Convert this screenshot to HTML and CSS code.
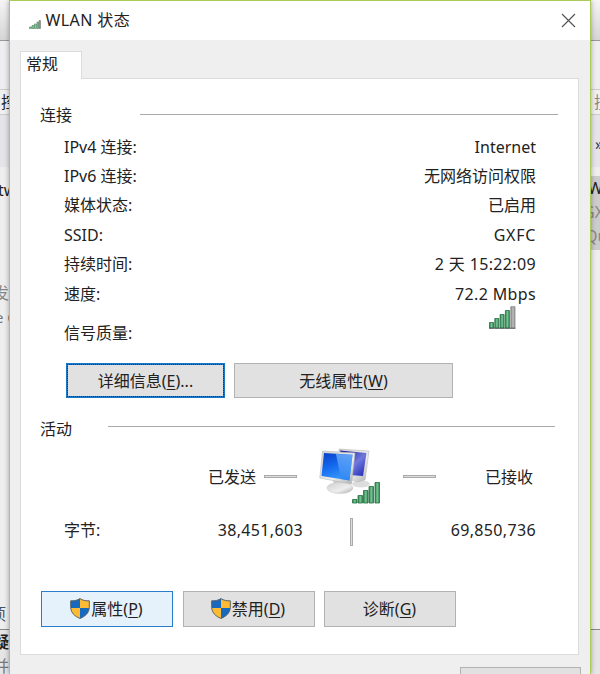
FILE: index.html
```
<!DOCTYPE html>
<html lang="zh-CN">
<head>
<meta charset="utf-8">
<title>WLAN 状态</title>
<link rel="stylesheet" href="styles.css">
</head>
<body>
<svg class="defs" width="0" height="0" aria-hidden="true">
  <defs>
    <linearGradient id="green" x1="0" x2="1" y1="0" y2="0"><stop offset="0" stop-color="#2c7d49"/><stop offset=".5" stop-color="#78c797"/><stop offset="1" stop-color="#2f8250"/></linearGradient>
    <linearGradient id="gray" x1="0" x2="1" y1="0" y2="0"><stop offset="0" stop-color="#888"/><stop offset=".5" stop-color="#bbb"/><stop offset="1" stop-color="#999"/></linearGradient>
    <linearGradient id="screen" x1="0" x2=".4" y1="0" y2="1"><stop offset="0" stop-color="#0b3fc4"/><stop offset=".5" stop-color="#1267ee"/><stop offset="1" stop-color="#3597fa"/></linearGradient>
    <linearGradient id="shine" x1="0" x2="0" y1="0" y2="1"><stop offset="0" stop-color="#8cc8ff"/><stop offset="1" stop-color="#2a7bf0"/></linearGradient>
    <linearGradient id="back" x1="0" x2="1" y1="0" y2="1"><stop offset="0" stop-color="#10108c"/><stop offset=".55" stop-color="#7079dc"/><stop offset="1" stop-color="#1b22b4"/></linearGradient>
    <linearGradient id="metal" x1="0" x2="1" y1="0" y2="1"><stop offset="0" stop-color="#cfcfcf"/><stop offset=".6" stop-color="#eee"/><stop offset="1" stop-color="#aaa"/></linearGradient>
    <symbol id="shield" viewBox="0 0 20 21">
      <path d="M10 .5C7.500 2.300 4 3 .7 2.800V10H10Z" fill="#1769bd"/>
      <path d="M10 .5C12.500 2.300 16 3 19.300 2.800V10H10Z" fill="#fdbb35"/>
      <path d="M.7 10C1 15 5 18.500 10 20.500V10Z" fill="#fdbb35"/>
      <path d="M19.300 10C19 15 15 18.500 10 20.500V10Z" fill="#1769bd"/>
      <path d="M10 .6C7.500 2.400 4 3 .7 2.800V9.500C1 15 5 18.500 10 20.400C15 18.500 19 15 19.300 9.500V2.800C16 3 12.500 2.400 10 .6Z" fill="none" stroke="#56636b"/>
    </symbol>
  </defs>
</svg>
<div class="desktop">
  <div class="behind left">
    <div class="edge"></div><div class="blank"></div>
    <div class="address"><span>控</span></div>
    <div class="toolbar"></div>
    <div class="content"><span class="net">tw</span><span class="state">发出</span><span class="device">e Q</span><span class="item">项</span></div>
    <div class="lower"><b>疑</b><span>并</span></div>
  </div>
  <main class="dialog">
    <header class="titlebar">
      <svg class="title-icon" width="12" height="9" viewBox="0 0 12 9"><path d="M.5 8.500V7H2.500V8.500ZM3 8.500V5.500H5V8.500ZM5.500 8.500V4H7.500V8.500ZM8 8.500V2H9.500V8.500Z" fill="#8cc79d" stroke="#55936a" stroke-width=".7"/><path d="M10 .5H11.500V8.500H10Z" fill="#999" stroke="#666" stroke-width=".5"/></svg>
      <h1>WLAN 状态</h1>
      <svg class="close" width="15" height="15" viewBox="0 0 15 15"><path d="M1 1L14 14M14 1L1 14" stroke="#555" stroke-width="1.200"/></svg>
    </header>
    <div class="tabs"><div class="tab">常规</div></div>
    <section class="panel">
      <div class="group"><h2>连接</h2><i></i></div>
      <dl class="facts">
        <div><dt>IPv4 连接:</dt><dd>Internet</dd></div>
        <div><dt>IPv6 连接:</dt><dd>无网络访问权限</dd></div>
        <div><dt>媒体状态:</dt><dd>已启用</dd></div>
        <div><dt>SSID:</dt><dd class="ssid">GXFC</dd></div>
        <div><dt>持续时间:</dt><dd class="figure">2 天 15:22:09</dd></div>
        <div><dt>速度:</dt><dd class="figure">72.2 Mbps</dd></div>
        <div class="signal"><dt>信号质量:</dt><dd><svg width="27" height="23" viewBox="0 0 27 23"><g fill="url(#green)" stroke="#276f42" stroke-width=".8"><path d="M.5 16.500H4.500V22H.5Z"/><path d="M5.800 12.500H9.800V22H5.800Z"/><path d="M11.100 8.500H15.100V22H11.100Z"/><path d="M16.400 4.500H20.400V22H16.400Z"/></g><path d="M21.800 .7H26V22H21.800Z" fill="url(#gray)" stroke="#888" stroke-width=".8"/><path d="M0 22.300H26.500" stroke="#444" stroke-width=".8"/></svg></dd></div>
      </dl>
      <div class="buttons details">
        <button class="default">详细信息(<u>E</u>)...</button>
        <button>无线属性(<u>W</u>)</button>
      </div>
      <div class="group activity"><h2>活动</h2><i></i></div>
      <div class="traffic">
        <span class="sent">已发送</span><i class="dash"></i>
        <svg class="computers" width="64" height="60" viewBox="0 0 64 60">
          <ellipse cx="42" cy="37" rx="9" ry="3.500" fill="#ddd"/>
          <path d="M20 2L50 4L46 33L38 35L20 28Z" fill="url(#metal)" stroke="#bbb" stroke-width=".6"/>
          <path d="M21 3.500L47.500 6L44 29L30 28Z" fill="url(#back)"/>
          <path d="M14 33H24L25 40H15Z" fill="#ccc"/>
          <ellipse cx="21" cy="41" rx="13" ry="5.500" fill="url(#metal)" stroke="#ccc" stroke-width=".6"/>
          <path d="M3.500 4L36 6L32.500 37L.8 31Z" fill="url(#metal)" stroke="#bbb" stroke-width=".6"/>
          <path d="M5 6L33.500 7.800L30.500 33.500L2.500 29Z" fill="url(#screen)"/>
          <path d="M17 7L33.500 7.800L30.500 33.500L22 32Z" fill="url(#shine)" opacity=".65"/>
          <g fill="url(#green)" stroke="#276f42" stroke-width=".8"><path d="M33.500 52.500H38V56H33.500Z"/><path d="M39 48.500H43.500V56H39Z"/><path d="M44.500 43.500H49V56H44.500Z"/><path d="M50 39.500H54.500V56H50Z"/><path d="M56 35.500H60.500V56H56Z"/></g>
        </svg>
        <i class="dash"></i><span class="received">已接收</span>
      </div>
      <div class="bytes"><span class="label">字节:</span><span class="out figure">38,451,603</span><i></i><span class="in figure">69,850,736</span></div>
      <div class="buttons actions">
        <button class="hot"><svg width="20" height="21"><use href="#shield"/></svg>属性(<u>P</u>)</button>
        <button><svg width="20" height="21"><use href="#shield"/></svg>禁用(<u>D</u>)</button>
        <button>诊断(<u>G</u>)</button>
      </div>
    </section>
    <footer><button></button></footer>
  </main>
  <div class="behind right">
    <div class="edge"></div><div class="blank"></div>
    <div class="address"><span>搜</span></div>
    <div class="toolbar"><span>»</span></div>
    <div class="content"><div class="selected"><b>W</b><span class="name">GX</span><span class="adapter">Qu</span></div></div>
    <div class="lower"></div>
  </div>
</div>
</body>
</html>
```
FILE: styles.css
```
* { box-sizing: border-box; }
body { margin: 0; overflow: hidden; background: #eee; color: #222; font: 16px/24px "Noto Sans", "Noto Sans CJK SC", sans-serif; }
.defs { position: absolute; }
h1, h2, dl, dt, dd { margin: 0; font-size: 16px; font-weight: 400; }
.desktop { display: grid; grid-template-columns: 9px 582px 9px; width: 600px; height: 674px; overflow: hidden; }

.behind { display: grid; grid-template-rows: 41px 48px 26px 52px 463px 44px; overflow: hidden; white-space: nowrap; }
.behind > div { overflow: hidden; min-width: 0; }
.edge { background: linear-gradient(#f5f5f5, #d5d5d5); border-bottom: 1px solid #999; }
.blank { background: #eeeef0; }
.address { border: 1px solid #ccc; border-width: 1px 0; background: #f0f0f0; }
.left .address span { margin-left: 1px; }
.right .address span { margin-left: 3px; color: #888; }
.toolbar { background: #e4e4e9; }
.right .toolbar { padding: 17px 0 0 4px; color: #234; }
.content { display: flex; flex-direction: column; background: #eee; border-bottom: 1px solid #888; }
.left .content { padding-top: 11px; }
.net { margin-left: -2px; color: #222; }
.state { margin: 79px 0 0 -7px; color: #888; }
.device { margin-left: -5px; color: #777; font-size: 15px; }
.item { margin: 273px 0 0 -10px; color: #456; }
.lower { background: #e5e5e5; }
.left .lower b, .left .lower span { display: block; margin-left: -7px; line-height: 24px; }
.left .lower span { color: #777; }
.selected { margin-top: 9px; height: 74px; background: #ccc; }
.selected b, .selected span { display: block; margin-left: -3px; line-height: 24px; font-weight: 400; }
.selected span { color: #888; }
.selected .name { margin-left: -8px; }
.selected .adapter { margin-left: -6px; }

.dialog { display: flex; flex-direction: column; height: 674px; border: 1px solid #aacb58; border-bottom: 0; background: #efefef; z-index: 1; box-shadow: 0 0 5px #0005; }
.titlebar { display: flex; align-items: center; flex: none; height: 39px; padding: 0 14px 0 19px; background: #fff; }
.title-icon { margin: 8px 4.500px 0 0; }
h1 { flex: 1; margin-top: -2px; letter-spacing: .4px; }
.close { display: block; }
.tabs { flex: none; height: 38px; padding: 11px 0 0 10px; }
.tab { position: relative; z-index: 1; width: 62px; height: 28px; padding: 0 0 0 5px; border: 1px solid #dcdcdc; border-bottom: 0; background: #fff; }
.panel { flex: none; width: 559px; height: 577px; margin-left: 10px; padding: 24px 0 0 19px; border: 1px solid #d9dcd9; background: #fff; }
.group { display: flex; height: 24px; }
.group h2 { width: 100px; }
.group i { width: 418px; height: 1px; margin-top: 11px; background: #aaa; }
.facts { width: 496px; padding: 5px 0 0 24px; }
.facts div { display: flex; justify-content: space-between; align-items: center; height: 29.400px; }
.facts .signal { height: 48.600px; }
.figure { letter-spacing: .35px; }
.ssid { letter-spacing: .7px; }
.signal dd { align-self: flex-start; margin: -2px 20px 0 0; height: 23px; line-height: 0; }
.buttons { display: flex; }
button { display: flex; align-items: center; justify-content: center; width: 132px; height: 36px; padding: 0 0 1px; border: 1px solid #b2b2b2; background: #e1e1e1; color: #222; font: inherit; }
u { text-decoration-thickness: 1px; text-underline-offset: 2px; }
.details { gap: 9px; margin: 6px 0 0 26px; }
.details button { width: 219px; height: 35px; padding: 1px 0 0; }
.details .default { width: 159px; border: 2px solid #1878c8; outline: 1px dotted #333; outline-offset: -2px; }
.activity { margin-top: 18px; }
.activity h2 { width: 68px; padding-top: 1px; }
.activity i { width: 447px; margin-top: 10px; }
.traffic { display: flex; align-items: center; height: 60px; margin-top: 7px; padding-left: 168px; }
.dash { width: 33px; height: 3px; border: 1px solid #aaa; background: #ddd; }
.sent { width: 56px; }
.computers { margin: 0 20px 0 22px; }
.received { margin-left: 49px; }
.bytes { display: flex; align-items: center; height: 30px; margin: 8px 0 0 24px; }
.label { width: 124px; }
.out { width: 115px; text-align: right; }
.bytes i { width: 3px; height: 28px; margin: 4px 0 0 47px; border: 1px solid #aaa; background: #ddd; }
.in { width: 183px; text-align: right; }
.actions { gap: 9.500px; margin: 46px 0 0 1px; }
.actions button { padding: 0 1px 0 0; }
.actions svg { flex: none; margin-right: 1px; }
.actions .hot { border-color: #287dcc; background: #e5f1fb; }
footer { display: flex; justify-content: flex-end; padding: 12px 9px 0 0; }
footer button { width: 121px; flex: none; }
```
